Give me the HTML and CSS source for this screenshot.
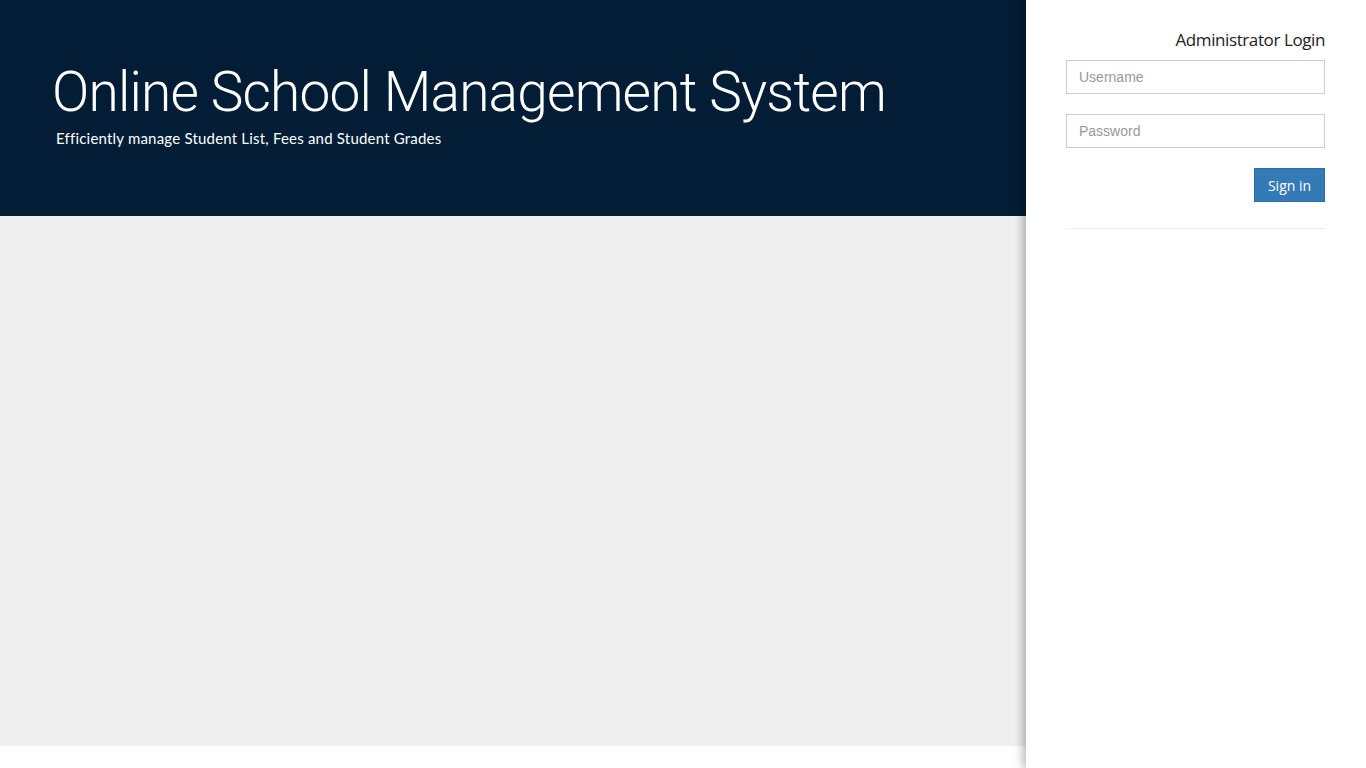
FILE: index.html
```html
<!DOCTYPE html>
<html>
<head>
<meta charset="utf-8">
<link rel="stylesheet" href="styles.css">
</head>
<body>
<div class="page">
  <main class="main">
    <header class="hero">
      <h1 class="title">Online School Management System</h1>
      <p class="subtitle">Efficiently manage Student List, Fees and Student Grades</p>
    </header>
    <section class="content"></section>
  </main>
  <aside class="panel">
    <form class="login">
      <h2 class="login-title">Administrator Login</h2>
      <input class="field" type="text" placeholder="Username">
      <input class="field" type="password" placeholder="Password">
      <div class="actions"><button class="btn" type="button">Sign in</button></div>
      <hr class="rule">
    </form>
  </aside>
</div>
</body>
</html>
```
FILE: styles.css
```css
html, body {
  margin: 0;
  padding: 0;
  height: 100%;
  background: #fff;
}
.page {
  display: flex;
  height: 768px;
  overflow: hidden;
}
.main {
  flex: 1;
  display: flex;
  flex-direction: column;
}
.hero {
  background: #021d35;
  height: 216px;
  box-sizing: border-box;
  padding: 59px 0 0 52px;
}
.title {
  margin: 0;
  font-family: "Roboto", sans-serif;
  font-weight: 300;
  font-size: 55px;
  line-height: 66px;
  color: #fff;
  letter-spacing: -0.8px;
}
.subtitle {
  margin: 4px 0 0 4px;
  font-family: "Lato", sans-serif;
  font-size: 15px;
  line-height: 18px;
  color: #fff;
  letter-spacing: 0.2px;
}
.content {
  background: #efefef;
  height: 530px;
}
.panel {
  width: 340px;
  background: #fff;
  box-shadow: -4px 0 8px rgba(0,0,0,0.25);
  position: relative;
  z-index: 1;
  box-sizing: border-box;
  padding: 28px 41px 0 40px;
}
.login {
  display: flex;
  flex-direction: column;
}
.login-title {
  margin: 0 0 8px;
  text-align: right;
  font-family: "Open Sans", sans-serif;
  font-weight: 400;
  font-size: 17px;
  line-height: 24px;
  color: #222;
  letter-spacing: -0.4px;
}
.field {
  height: 34px;
  box-sizing: border-box;
  border: 1px solid #ccc;
  border-radius: 0;
  padding: 6px 12px;
  font-family: "Liberation Sans", Arial, sans-serif;
  font-size: 14px;
  color: #555;
  margin: 0 0 20px;
  outline: none;
}
.field::placeholder {
  color: #999;
}
.actions {
  display: flex;
  justify-content: flex-end;
}
.btn {
  height: 34px;
  width: 71px;
  background: #337ab7;
  border: 1px solid #2e6da4;
  border-radius: 0;
  color: #fff;
  font-family: "Open Sans", sans-serif;
  font-size: 14px;
  padding: 0;
}
.rule {
  margin: 26px 0 0;
  border: 0;
  border-top: 1px solid #eee;
}
```
